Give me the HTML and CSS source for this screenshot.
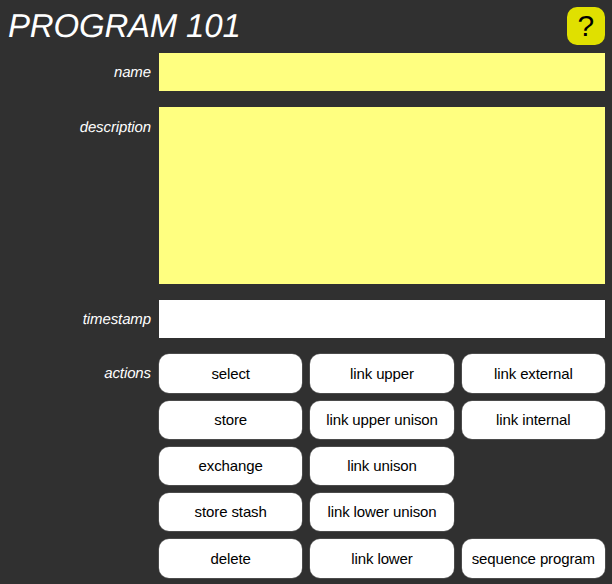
FILE: index.html
```html
<!DOCTYPE html>
<html lang="en">
<head>
<meta charset="utf-8">
<title>Program 101</title>
<link rel="stylesheet" href="styles.css">
</head>
<body>
<header class="header"><h1 class="title">PROGRAM 101</h1><button class="help">?</button></header>
<main class="form">
<label class="label" for="name">name</label><input class="field" id="name">
<label class="label label-description" for="description">description</label><textarea class="field description" id="description"></textarea>
<label class="label" for="timestamp">timestamp</label><input class="field timestamp" id="timestamp" readonly>
<span class="label">actions</span>
<div class="actions">
<button class="action">select</button><button class="action">link upper</button><button class="action">link external</button>
<button class="action">store</button><button class="action">link upper unison</button><button class="action">link internal</button>
<button class="action">exchange</button><button class="action">link unison</button><span></span>
<button class="action">store stash</button><button class="action">link lower unison</button><span></span>
<button class="action">delete</button><button class="action">link lower</button><button class="action">sequence program</button>
</div>
</main>
</body>
</html>
```
FILE: styles.css
```css
* { box-sizing: border-box; }
body {
  margin: 0;
  height: 584px;
  overflow: hidden;
  background: #303030;
  color: #fff;
  font-family: "Liberation Sans", Arial, sans-serif;
  font-size: 15px;
  letter-spacing: -0.11px;
  text-rendering: geometricPrecision;
}
button, input, textarea { font: inherit; letter-spacing: inherit; }
.header {
  display: flex;
  justify-content: space-between;
  height: 53px;
  padding: 7px 7px 0 8px;
}
.title {
  margin: 0;
  font-size: 33px;
  font-style: italic;
  font-weight: normal;
  letter-spacing: -0.2px;
  line-height: 37px;
}
.help {
  width: 38.5px;
  height: 38px;
  padding: 0;
  border: 0;
  border-radius: 10px;
  background: #e0e000;
  color: #000;
  font-size: 30px;
  line-height: 38px;
}
.form {
  display: grid;
  grid-template-columns: 151px 446px;
  grid-template-rows: 38px 177px 38px 224px;
  column-gap: 8px;
  row-gap: 16px;
}
.label {
  font-style: italic;
  line-height: 39px;
  text-align: right;
}
.label-description { line-height: 41px; }
.field {
  display: block;
  width: 100%;
  height: 100%;
  padding: 0 8px;
  border: 0;
  border-radius: 0;
  outline: 0;
  background: #ffff80;
}
.description { resize: none; }
.timestamp { background: #fff; }
.actions {
  display: grid;
  grid-template-columns: repeat(3, 1fr);
  grid-template-rows: 39px 38px 38px 38px 39px;
  gap: 8px;
}
.action {
  padding: 0;
  border: 0;
  border-radius: 10px;
  background: #fff;
  box-shadow: 0 0 0 0.5px #666;
  color: #000;
  line-height: 38px;
  white-space: nowrap;
}
```
